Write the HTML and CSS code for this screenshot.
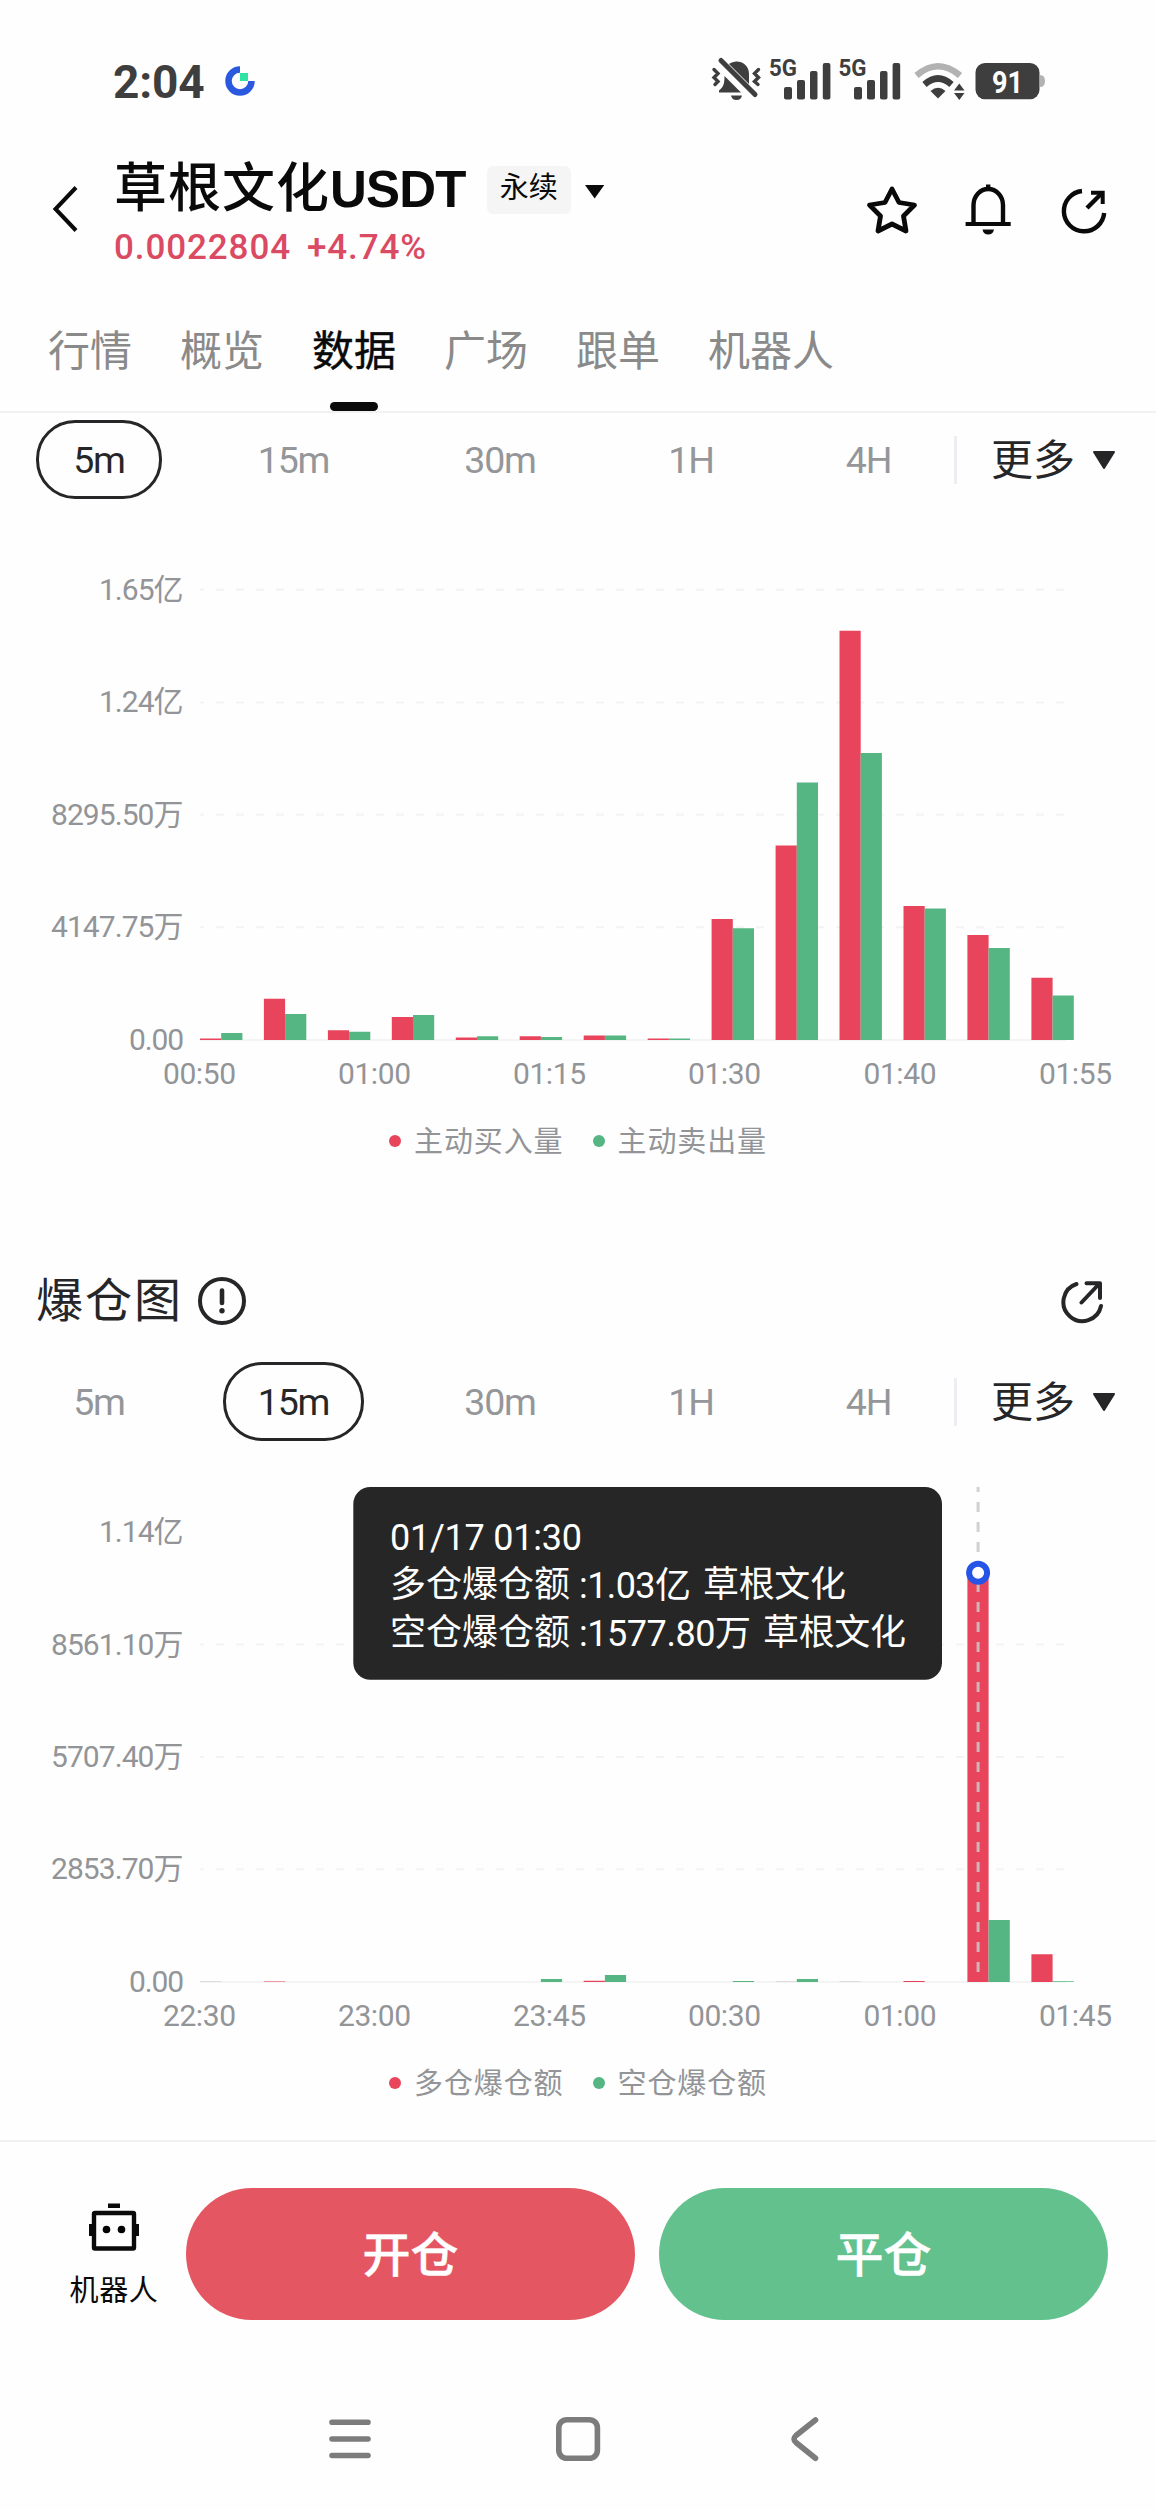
FILE: index.html
```html
<!DOCTYPE html>
<html lang="zh-CN">
<head>
<meta charset="utf-8">
<title>草根文化USDT 永续</title>
<link rel="stylesheet" href="styles.css">
</head>
<body>
<div class="status">
  <span class="clock">2:04</span>
  <svg class="app-mark" viewBox="-15 -15 30 30"><path d="M0 -11.5A11.5 11.5 0 1 0 11.5 0" fill="none" stroke="#2a59e0" stroke-width="6.5"/><path d="M0 -8H8V0H0z" fill="#2fe3a5"/></svg>
  <svg class="status-icons" viewBox="706 50 345 60">
    <g fill="#3e3e3e">
      <path d="M719 92.500V90.500C724 87 724.500 82 724.500 76L741 92.500zM729 64C736 58.500 749 62 749 74V84z"/>
      <path d="M731 95.500H742Q741 100 736.500 100T731 95.500z"/>
      <path d="M721 60.500L755 94.500" stroke="#3e3e3e" stroke-width="5" stroke-linecap="round"/>
      <path d="M714 69.500l4 4-4 4 4 4-3 3M758.500 69.500l-4 4 4 4-4 4 3.500 3" fill="none" stroke="#3e3e3e" stroke-width="3.400" stroke-linecap="round"/>
      <text class="net" x="769" y="76" textLength="28" lengthAdjust="spacingAndGlyphs">5G</text>
      <rect x="784" y="87" width="8" height="12.500" rx="2"/><rect x="797" y="80" width="8" height="19.500" rx="2"/><rect x="810" y="71" width="7.500" height="28.500" rx="2"/><rect x="822.800" y="63" width="7.600" height="36.500" rx="2"/>
      <text class="net" x="838.500" y="76" textLength="28" lengthAdjust="spacingAndGlyphs">5G</text>
      <rect x="854" y="87" width="8" height="12.500" rx="2"/><rect x="867" y="80" width="8" height="19.500" rx="2"/><rect x="880" y="71" width="7.500" height="28.500" rx="2"/><rect x="892.600" y="63" width="7.600" height="36.500" rx="2"/>
      <path d="M916.500 75.500Q938 57 960 75.500" fill="none" stroke="#b2b2b2" stroke-width="6.500"/>
      <path d="M924.500 84.500Q938 72.500 951.500 84.500" fill="none" stroke="#3e3e3e" stroke-width="6.500"/>
      <path d="M930.500 91Q938 84.500 945.500 91L938 98.500z"/>
      <path d="M954 90.500L959.300 83.500L964.500 90.500zM954 93L959.300 100L964.500 93z"/>
      <path d="M1040 75Q1045 75 1045 81T1040 87z" fill="#b2b2b2"/>
      <rect x="975.500" y="63" width="64" height="36.200" rx="9.500"/>
    </g>
    <text class="charge" x="992" y="93" textLength="31" lengthAdjust="spacingAndGlyphs">91</text>
  </svg>
</div>

<header class="head">
  <svg class="back" viewBox="0 0 28 48"><path d="M25 2.500L4.500 24L25 45.500" fill="none" stroke="#0a0a0a" stroke-width="4"/></svg>
  <div class="pair">
    <div class="pair-name"><span class="name-cn">草根文化</span><span class="name-en">USDT</span><span class="tag">永续</span><i class="caret"></i></div>
    <div class="price"><span>0.0022804</span><span>+4.74%</span></div>
  </div>
  <div class="actions">
    <svg width="54" height="54" viewBox="865 182 54 54"><path d="M892 189L899 202.500L914.500 205L903.500 216L906 231L892 224L878 231L880.500 216L869.500 205L885 202.500z" fill="none" stroke="#0a0a0a" stroke-width="4.800" stroke-linejoin="round"/></svg>
    <svg width="54" height="54" viewBox="961 182 54 54"><path d="M973.500 223V205A14.700 16 0 0 1 1003 205V223M988.200 184.500V190" fill="none" stroke="#0a0a0a" stroke-width="4.400"/><path d="M965.600 222H1010.700V226H965.600zM982.500 229.500H994Q993 234.500 988.200 234.500T982.500 229.500z" fill="#0a0a0a"/></svg>
    <svg width="54" height="54" viewBox="1057 182 54 54"><path d="M1082 191A20.200 20.200 0 1 0 1104.200 213M1087 208L1102 193" fill="none" stroke="#0a0a0a" stroke-width="4.400"/><path d="M1091 192.800H1102.700V204" fill="none" stroke="#0a0a0a" stroke-width="4"/></svg>
  </div>
</header>

<nav class="tabs"><span>行情</span><span>概览</span><span class="on">数据</span><span>广场</span><span>跟单</span><span>机器人</span></nav>

<section>
  <div class="periods">
    <span class="p1 on">5m</span><span class="p2">15m</span><span class="p3">30m</span><span class="p4">1H</span><span class="p5">4H</span>
    <i class="rule"></i><span class="more">更多</span><svg class="drop" viewBox="0 0 24 20"><path d="M2 2H22L12 18z" fill="#262628" stroke="#262628" stroke-width="2" stroke-linejoin="round"/></svg>
  </div>
  <svg class="chart" viewBox="0 520 1156 580">
    <g class="grid"><path d="M200 589.800H1066M200 702.400H1066M200 814.700H1066M200 927.300H1066"/><path class="zero" d="M200 1040H1066"/></g>
    <g class="axis">
      <text x="99" y="600" textLength="84.500">1.65亿</text><text x="99" y="712" textLength="84.500">1.24亿</text>
      <text x="51" y="825" textLength="132.500">8295.50万</text><text x="51" y="937.300" textLength="132.500">4147.75万</text><text x="129" y="1049.500" textLength="55">0.00</text>
      <text x="163" y="1083.500" textLength="73">00:50</text><text x="338" y="1083.500" textLength="73">01:00</text><text x="513" y="1083.500" textLength="73">01:15</text><text x="688" y="1083.500" textLength="73">01:30</text><text x="863.500" y="1083.500" textLength="73">01:40</text><text x="1039" y="1083.500" textLength="73">01:55</text>
    </g>
    <path class="buy" d="M200 1040v-1.600h21.200v1.600zM263.900 1040v-41.200h21.200v41.200zM327.900 1040v-9.800h21.200v9.800zM391.800 1040v-23h21.200v23zM455.800 1040v-2.500h21.200v2.500zM519.700 1040v-3.700h21.200v3.700zM583.700 1040v-4.500h21.200v4.500zM647.700 1040v-1.600h21.200v1.600zM711.600 1040v-121h21.200v121zM775.600 1040v-194.500h21.200v194.500zM839.500 1040v-409.300h21.200v409.300zM903.500 1040v-134h21.200v134zM967.400 1040v-105h21.200v105zM1031.400 1040v-62.200h21.200v62.200z"/>
    <path class="sell" d="M221.200 1040v-7h21.200v7zM285.100 1040v-26.100h21.200v26.100zM349.100 1040v-8.200h21.200v8.200zM413 1040v-25h21.200v25zM477 1040v-3.700h21.200v3.700zM540.900 1040v-3h21.200v3zM604.900 1040v-4.500h21.200v4.500zM668.900 1040v-1.600h21.200v1.600zM732.800 1040v-111.800h21.200v111.800zM796.800 1040v-257.600h21.200v257.600zM860.700 1040v-287h21.200v287zM924.700 1040v-131.400h21.200v131.400zM988.600 1040v-92h21.200v92zM1052.600 1040v-44.500h21.200v44.500z"/>
  </svg>
  <div class="legend"><i class="dot red"></i><span>主动买入量</span><i class="dot green"></i><span>主动卖出量</span></div>
</section>

<section class="second">
  <div class="title"><h2>爆仓图</h2>
    <svg width="50" height="50" viewBox="0 0 50 50"><circle cx="25" cy="25" r="22" fill="none" stroke="#262628" stroke-width="4"/><path d="M25 14.500V27" stroke="#262628" stroke-width="4.600" stroke-linecap="round"/><circle cx="25" cy="34.800" r="2.700" fill="#262628"/></svg>
    <svg class="share" width="46" height="46" viewBox="1058 1279 46 46"><path d="M1076.500 1284A19 19 0 1 0 1101 1306M1081.500 1302.500L1099 1284M1086.500 1283.200H1100V1298" fill="none" stroke="#262628" stroke-width="4" stroke-linecap="round" stroke-linejoin="round"/></svg>
  </div>
  <div class="periods">
    <span class="p1">5m</span><span class="p2 on">15m</span><span class="p3">30m</span><span class="p4">1H</span><span class="p5">4H</span>
    <i class="rule"></i><span class="more">更多</span><svg class="drop" viewBox="0 0 24 20"><path d="M2 2H22L12 18z" fill="#262628" stroke="#262628" stroke-width="2" stroke-linejoin="round"/></svg>
  </div>
  <svg class="chart" viewBox="0 1462 1156 580">
    <g class="grid"><path d="M200 1644.400H1066M200 1756.900H1066M200 1869.300H1066"/><path class="zero" d="M200 1982H1066"/></g>
    <g class="axis">
      <text x="99" y="1542" textLength="84.500">1.14亿</text><text x="51" y="1654.500" textLength="132.500">8561.10万</text>
      <text x="51" y="1767" textLength="132.500">5707.40万</text><text x="51" y="1879.300" textLength="132.500">2853.70万</text><text x="129" y="1991.700" textLength="55">0.00</text>
      <text x="163" y="2025.500" textLength="73">22:30</text><text x="338" y="2025.500" textLength="73">23:00</text><text x="513" y="2025.500" textLength="73">23:45</text><text x="688" y="2025.500" textLength="73">00:30</text><text x="863.500" y="2025.500" textLength="73">01:00</text><text x="1039" y="2025.500" textLength="73">01:45</text>
    </g>
    <path class="buy" d="M263.900 1982v-.5h21.200v.5zM583.700 1982v-1.200h21.200v1.200zM903.500 1982v-1h21.200v1zM967.400 1982V1572.700h21.200V1982zM1031.400 1982v-27.700h21.200v27.700z"/>
    <path class="faint" d="M200 1981.500h21.200M775.600 1981.500h21.200M839.500 1981.500h21.200"/>
    <path class="sell" d="M540.900 1982v-3h21.200v3zM604.900 1982v-7h21.200v7zM732.800 1982v-1h21.200v1zM796.800 1982v-3h21.200v3zM988.600 1982v-62h21.200v62zM1052.600 1982v-.7h21.200v.7z"/>
    <path class="cursor" d="M978.100 1487V1982"/>
    <circle cx="978.100" cy="1572.700" r="9" fill="#fff" stroke="#2654e6" stroke-width="6"/>
    <rect x="353.300" y="1487" width="588.700" height="192.700" rx="17" fill="#262626"/>
    <g class="tip">
      <text x="390" y="1550" textLength="192">01/17 01:30</text>
      <text x="390" y="1596.500" textLength="180">多仓爆仓额</text><text x="579" y="1597.500" textLength="112">:1.03亿</text><text x="703" y="1596.500" textLength="143">草根文化</text>
      <text x="390" y="1644.500" textLength="180">空仓爆仓额</text><text x="579" y="1645.500" textLength="172">:1577.80万</text><text x="763" y="1644.500" textLength="143">草根文化</text>
    </g>
  </svg>
  <div class="legend"><i class="dot red"></i><span>多仓爆仓额</span><i class="dot green"></i><span>空仓爆仓额</span></div>
</section>

<footer class="trade">
  <div class="bot">
    <svg width="52" height="50" viewBox="0 0 52 50"><path d="M20 1.500H32V6H20zM1 22H5V34H1zM47 22H51V34H47z" fill="#0a0a0a"/><rect x="6" y="11" width="40" height="35.500" rx="1" fill="none" stroke="#0a0a0a" stroke-width="4.400"/><circle cx="18.500" cy="27.500" r="3.800"/><circle cx="33.500" cy="27.500" r="3.800"/></svg>
    <span>机器人</span>
  </div>
  <button class="open">开仓</button>
  <button class="close">平仓</button>
</footer>
<div class="sysnav">
  <svg viewBox="320 2410 510 60" width="510" height="60" fill="none" stroke="#7c7c7c" stroke-width="5.600" stroke-linecap="round"><path d="M332 2422.300H368M332 2439H368M332 2455.500H368"/><rect x="558.800" y="2419.700" width="38.600" height="38.600" rx="8"/><path d="M815.500 2420L796 2435.500Q792 2439 796 2442.500L815.500 2458.300"/></svg>
</div>
</body>
</html>
```
FILE: styles.css
```css
* { box-sizing: border-box; }
body {
  margin: 0;
  width: 1156px;
  height: 2510px;
  overflow: hidden;
  background: #fefefe;
  color: #0a0a0a;
  font-family: Roboto, "Noto Sans CJK SC", sans-serif;
  display: flex;
  flex-direction: column;
}
svg { display: block; flex: none; }

.status { height: 130px; display: flex; align-items: flex-start; padding-left: 113px; }
.clock { width: 112px; margin-top: 53px; font: 700 46px/58px Roboto, sans-serif; letter-spacing: -.2px; color: #3e3e3e; }
.app-mark { width: 30px; height: 30px; margin-top: 66px; }
.status-icons { width: 345px; height: 60px; margin: 50px 0 0 451px; }
.net { font: 700 24px Roboto, sans-serif; }
.charge { font: 700 32px Roboto, sans-serif; fill: #fff; }

.head { height: 160px; display: flex; padding-left: 51px; }
.back { width: 28px; height: 48px; margin-top: 55px; }
.pair { width: 786px; padding-left: 35px; }
.pair-name { height: 94px; padding-top: 26px; display: flex; align-items: center; }
.name-cn { font-size: 53px; line-height: 68px; letter-spacing: 1px; font-weight: 500; height: 68px; margin-top: -2px; }
.name-en { font: 700 51px/68px "Liberation Sans", sans-serif; letter-spacing: -.8px; height: 68px; }
.tag { width: 84px; height: 48px; margin-left: 21px; border-radius: 6px; background: #f5f5f5; font-size: 29px; line-height: 45px; text-align: center; }
.caret { width: 20px; height: 14px; margin: 3px 0 0 14px; background: #0a0a0a; clip-path: polygon(0 0, 100% 0, 50% 100%); }
.price { display: flex; gap: 16px; font-size: 35px; line-height: 42px; font-weight: 500; letter-spacing: .9px; color: #db4a63; margin-top: 3px; }
.actions { display: flex; gap: 42px; padding-top: 52px; }

.tabs { height: 123px; flex: none; padding-left: 48px; display: flex; gap: 48px; border-bottom: 2px solid #f1f1f1; font-size: 42px; line-height: 62px; color: #8a8a8a; }
.tabs span { padding-top: 31px; }
.tabs .on { color: #0a0a0a; display: flex; flex-direction: column; align-items: center; -webkit-text-stroke: .4px #0a0a0a; }
.tabs .on::after { content: ""; width: 48px; height: 9px; border-radius: 5px; background: #0a0a0a; margin-top: 19px; }

.periods { height: 107px; padding: 7px 0 0 36px; display: grid; grid-template-columns: 126px 61px 141px 65px 142px 78px 84px 94px 83px 44px 3px 34px 84px 17px 24px; color: #949699; font-size: 37.500px; }
.periods span { height: 79px; line-height: 73px; padding-top: 2px; border: 3px solid transparent; border-radius: 39px; display: flex; justify-content: center; align-items: center; letter-spacing: -1.200px; }
.periods .on { border-color: #262628; color: #262628; }
.p1 { grid-column: 1; }
.p2 { grid-column: 3; }
.p3 { grid-column: 5; }
.p4 { grid-column: 7; }
.p5 { grid-column: 9; }
.rule { grid-column: 11; height: 48px; margin-top: 16px; background: #eceef1; }
.periods .more { grid-column: 13; border: 0; font-size: 42px; letter-spacing: 0; color: #262628; }
.drop { grid-column: 15; width: 24px; height: 20px; margin-top: 30px; }

.chart { width: 1156px; height: 580px; }
.grid { fill: none; stroke: #f3f3f3; stroke-width: 2; stroke-dasharray: 8 12; stroke-dashoffset: 4; }
.grid .zero { stroke-dasharray: none; stroke: #f4f4f4; }
.axis { font-size: 30px; fill: #929497; }
.buy { fill: #e8445c; }
.sell { fill: #56b683; }
.faint { stroke: #dfdcdc; stroke-width: 1; }
.cursor { stroke: #c9c9c9; stroke-opacity: .85; stroke-width: 3; stroke-dasharray: 10 10; stroke-dashoffset: 5; }
.tip { font-size: 36px; fill: #fff; }

.legend { height: 82px; padding: 19px 0 0 389px; display: flex; align-items: flex-start; font-size: 29px; line-height: 46px; letter-spacing: .9px; color: #929497; }
.dot { width: 12px; height: 12px; border-radius: 50%; margin: 16px 13px 0 0; }
.legend span + .dot { margin-left: 29px; }
.dot.red { background: #e8445c; }
.dot.green { background: #56b683; }

.second { padding-top: 82px; }
.title { height: 91px; padding: 12px 0 0 36px; display: flex; color: #262628; }
h2 { margin: -6px 14px 0 0; font-size: 47px; line-height: 62px; font-weight: 400; letter-spacing: 2px; }
.share { margin: 3px 0 0 811px; }

.trade { flex: none; border-top: 2px solid #f1f1f1; height: 224px; margin-top: 16px; display: flex; padding: 46px 0 0 69px; }
.bot { width: 90px; display: flex; flex-direction: column; align-items: center; font-size: 29px; line-height: 44px; letter-spacing: .6px; white-space: nowrap; padding-top: 14px; gap: 17px; margin-right: 27px; }
button { border: 0; width: 449px; height: 132px; border-radius: 66px; padding: 0 0 6px; margin-right: 24px; font: 500 48px/64px "Noto Sans CJK SC", sans-serif; -webkit-text-stroke: .4px #fff; color: #fff; flex: none; }
.open { background: #e45661; }
.close { background: #63c18e; }
.sysnav { padding: 46px 0 0 320px; }
```
